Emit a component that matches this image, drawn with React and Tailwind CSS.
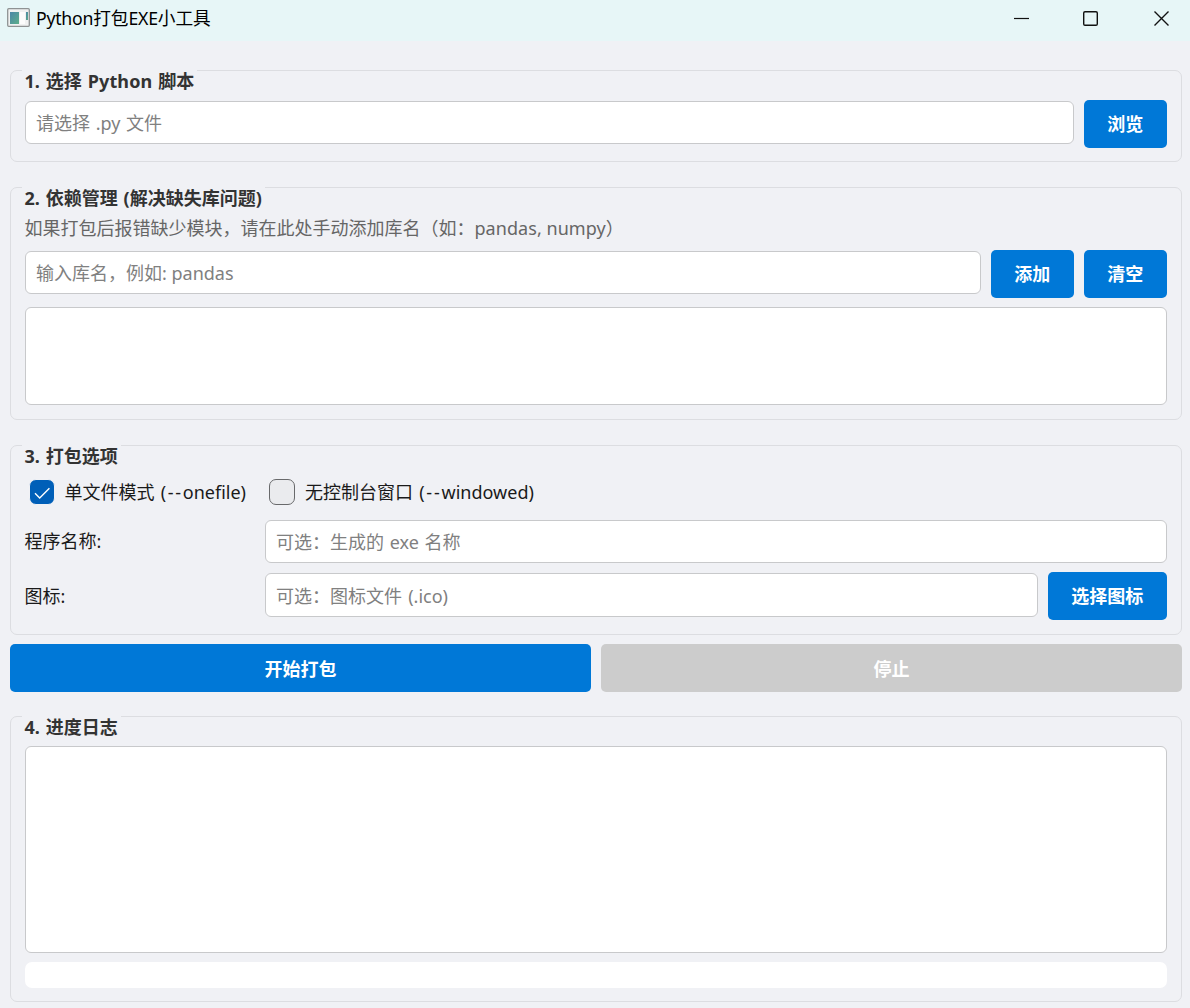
import React, { useState } from 'react';
import clsx from 'clsx';

const GroupBox = ({ title, className, children }) => (
  <section className={clsx('rounded-[7px] border-[1.5px] border-[#dcdde1] pr-[14px] pl-[13.5px]', className)}>
    <h2 className="-mt-[1.5px] -ml-[3px] w-fit h-[24px] px-[3px] bg-[#f0f1f5] text-[18px] leading-[22px] font-bold text-[#333333] whitespace-nowrap [word-spacing:1.2px]">
      {title}
    </h2>
    {children}
  </section>
);

const Button = ({ className, children, ...props }) => (
  <button
    type="button"
    className={clsx(
      'h-[48px] shrink-0 rounded-[5px] bg-[#0078d7] pt-px text-[18px] leading-[24px] font-bold text-white disabled:bg-[#cccccc]',
      className
    )}
    {...props}
  >
    {children}
  </button>
);

const TextInput = ({ className, ...props }) => (
  <input
    type="text"
    className={clsx(
      'h-[43.5px] min-w-0 flex-1 rounded-[6px] border-[1.5px] border-[#c8c9cb] bg-white pt-[2px] pr-[11px] pl-[10.5px] text-[18px] text-[#1a1a1a] placeholder:text-[#808080] outline-none',
      className
    )}
    {...props}
  />
);

const CheckBox = ({ checked, onChange, children }) => (
  <label className="flex items-center whitespace-nowrap">
    <input type="checkbox" checked={checked} onChange={onChange} className="sr-only" />
    <span
      className={clsx(
        'flex size-[26px] items-center justify-center rounded-[7px]',
        checked ? 'border border-[#f0f1f5] bg-[#005fb8]' : 'border-[1.5px] border-[#68696b] bg-[#eaebee]'
      )}
    >
      {checked && (
        <svg width="24" height="24" viewBox="0 0 24 24" fill="none" stroke="#fff" strokeWidth="1.4">
          <path d="M5 13.2 L9.7 17.9 L19.4 8.2" />
        </svg>
      )}
    </span>
    <span className="ml-[9.5px]">{children}</span>
  </label>
);

const TitleBar = () => (
  <header className="flex h-[41px] items-center bg-[#e7f6f7] pb-[5px] text-black">
    <svg className="-mt-px ml-[7px]" width="23" height="19" viewBox="0 0 23 19">
      <defs>
        <linearGradient id="pane" x1="0" y1="0" x2="1" y2="1">
          <stop offset="0" stopColor="#4b86a8" />
          <stop offset="1" stopColor="#5cae8a" />
        </linearGradient>
      </defs>
      <rect x="0.7" y="0.7" width="21.6" height="17.6" rx="1" fill="#f0f1f1" stroke="#8f9293" strokeWidth="1.3" />
      <rect x="3" y="4" width="9" height="12" fill="url(#pane)" />
      <rect x="13" y="4" width="5" height="12" fill="#fcfcfc" />
      <rect x="19" y="4" width="2" height="8" fill="url(#pane)" />
    </svg>
    <h1 className="ml-[6px] flex-1 text-[17.7px] leading-[24px]">
      <span className="tracking-[-0.25px]">Python</span>打包<span className="tracking-[-0.3px]">EXE</span>小工具
    </h1>
    <svg width="190" height="36" viewBox="0 0 190 36" fill="none" stroke="#111" strokeWidth="1.4">
      <path d="M14 18.5h15" strokeWidth="1.2" />
      <rect x="83.7" y="11.7" width="13.6" height="13.6" rx="1.3" />
      <path d="M154.5 11.5l14 14M168.5 11.5l-14 14" />
    </svg>
  </header>
);

const App = () => {
  const [script, setScript] = useState('');
  const [lib, setLib] = useState('');
  const [libs, setLibs] = useState([]);
  const [oneFile, setOneFile] = useState(true);
  const [windowed, setWindowed] = useState(false);
  const [exeName, setExeName] = useState('');
  const [icon, setIcon] = useState('');

  const addLib = () => {
    const name = lib.trim();
    if (name && !libs.includes(name)) setLibs([...libs, name]);
    setLib('');
  };

  return (
    <div className="h-[1008px] w-[1190px] overflow-hidden bg-[#f0f1f5] font-['Noto_Sans','Noto_Sans_CJK_SC',sans-serif] text-[18px] leading-[24px] text-[#1a1a1a]">
      <TitleBar />
      <main className="flex flex-col pt-[29px] pr-[8px] pl-[10px]">
        <GroupBox title={<>1. 选择 <span className="tracking-[0.15px]">Python</span> 脚本</>} className="h-[92px]">
          <div className="mt-[6px] flex items-start gap-[9.5px]">
            <TextInput className="mt-px [word-spacing:1px]" placeholder="请选择 .py 文件" value={script} onChange={(e) => setScript(e.target.value)} />
            <Button className="w-[83.5px]">浏览</Button>
          </div>
        </GroupBox>

        <GroupBox title="2. 依赖管理 (解决缺失库问题)" className="mt-[25px] h-[233px]">
          <p className="mt-[5px] text-[#666666]">
            如果打包后报错缺少模块，请在此处手动添加库名（如：<span className="tracking-[0.05px]">pandas, numpy</span>）
          </p>
          <div className="mt-[10px] flex items-start gap-[9.5px]">
            <TextInput className="mt-px" placeholder="输入库名，例如: pandas" value={lib} onChange={(e) => setLib(e.target.value)} />
            <Button className="w-[83.5px]" onClick={addLib}>添加</Button>
            <Button className="w-[83.5px]" onClick={() => setLibs([])}>清空</Button>
          </div>
          <ul className="mt-[9px] h-[98.5px] overflow-auto rounded-[6px] border-[1.5px] border-[#c8c9cb] bg-white">
            {libs.map((l) => (
              <li key={l} className="px-2">{l}</li>
            ))}
          </ul>
        </GroupBox>

        <GroupBox title="3. 打包选项" className="mt-[25px] h-[190px]">
          <div className="mt-[10px] ml-[4.5px] flex gap-[23.5px] [word-spacing:1.5px]">
            <CheckBox checked={oneFile} onChange={(e) => setOneFile(e.target.checked)}>
              单文件模式 <span className="tracking-[1.7px]">(--</span>onefile)
            </CheckBox>
            <CheckBox checked={windowed} onChange={(e) => setWindowed(e.target.checked)}>
              无控制台窗口 <span className="tracking-[1.8px]">(--</span>windowed)
            </CheckBox>
          </div>
          <div className="mt-[15px] flex items-center">
            <label className="w-[240px]">程序名称:</label>
            <TextInput className="pt-px [word-spacing:1px]" placeholder="可选：生成的 exe 名称" value={exeName} onChange={(e) => setExeName(e.target.value)} />
          </div>
          <div className="mt-[8.5px] flex items-start">
            <label className="mt-[12.5px] w-[240px]">图标:</label>
            <TextInput className="mt-[1.5px] [word-spacing:1.5px]" placeholder="可选：图标文件 (.ico)" value={icon} onChange={(e) => setIcon(e.target.value)} />
            <Button className="ml-[9.5px] w-[119.5px]">选择图标</Button>
          </div>
        </GroupBox>

        <div className="mt-[9px] flex gap-[10px]">
          <Button className="flex-1">开始打包</Button>
          <Button className="flex-1" disabled>停止</Button>
        </div>

        <GroupBox title="4. 进度日志" className="mt-[24px] h-[286px]">
          <div className="mt-[6px] h-[207px] rounded-[6px] border-[1.5px] border-[#c8c9cb] bg-white" />
          <div className="mt-[9px] h-[26px] rounded-[7px] bg-white" />
        </GroupBox>
      </main>
    </div>
  );
};

export default App;
